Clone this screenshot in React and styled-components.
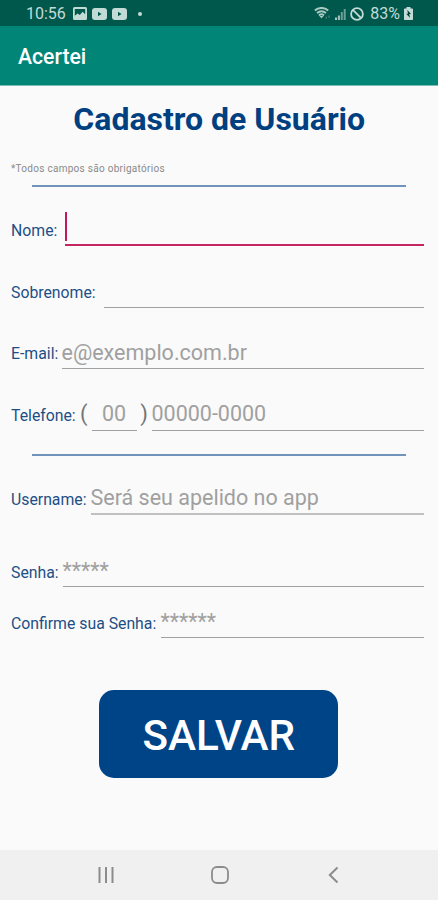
import React from "react";
import styled, { createGlobalStyle } from "styled-components";

const GlobalStyle = createGlobalStyle`
  * {
    box-sizing: border-box;
  }

  body {
    margin: 0;
    background-color: #fafafa;
    font-family: Roboto, "Noto Sans", sans-serif;
  }
`;

const Screen = styled.div`
  display: flex;
  flex-direction: column;
  width: 438px;
  height: 900px;
  overflow: hidden;
  background-color: #fafafa;
`;

const StatusBar = styled.div`
  display: flex;
  justify-content: space-between;
  align-items: center;
  height: 26px;
  padding: 1px 25px 0 26px;
  background-color: #00574b;
  color: #c3dbd6;
`;

const StatusGroup = styled.div`
  display: flex;
  align-items: center;
  gap: ${(props) => props.$gap};
`;

const StatusText = styled.span`
  font-size: 16px;
  line-height: 24px;
  white-space: nowrap;
  margin: 0 ${(props) => props.$right || "0"} 0 ${(props) => props.$left || "0"};
`;

const Dot = styled.span`
  width: 4px;
  height: 4px;
  margin-left: 6px;
  border-radius: 50%;
  background-color: #c3dbd6;
`;

const AppBar = styled.header`
  display: flex;
  align-items: center;
  height: 60px;
  padding: 2px 0 0 18px;
  background-color: #008577;
  border-bottom: 1px solid #7dbdb6;
  color: #fff;
  font-size: 21.2px;
  font-weight: 500;
`;

const Form = styled.main`
  display: flex;
  flex-direction: column;
  flex: 1;
  padding: 0 14.5px 0 11px;
`;

const Title = styled.h1`
  margin: 13px 0 0 4px;
  color: #003f80;
  font-size: 32px;
  font-weight: 700;
  line-height: 40px;
  text-align: center;
  white-space: nowrap;
`;

const Notice = styled.p`
  margin: 24px 0 0;
  color: #8a8a8a;
  font-size: 10px;
  line-height: 12px;
  letter-spacing: 0.28px;
`;

const Divider = styled.hr`
  width: 374px;
  height: 2px;
  margin: ${(props) => props.$top} 0 0 21px;
  border: none;
  background-color: #6f93b9;
`;

const Row = styled.div`
  display: flex;
  align-items: flex-end;
  height: ${(props) => props.$height}px;
`;

const Label = styled.label`
  flex: none;
  width: ${(props) => props.$width}px;
  padding-bottom: ${(props) => props.$bottom || 5}px;
  color: #1d4f86;
  font-size: 15.8px;
  line-height: 20px;
  white-space: nowrap;
`;

const Field = styled.div`
  display: flex;
  align-items: flex-end;
  justify-content: ${(props) => (props.$center ? "center" : "flex-start")};
  flex: ${(props) => (props.$width ? "none" : "1")};
  width: ${(props) => (props.$width ? props.$width + "px" : "auto")};
  height: 36px;
  padding-bottom: ${(props) => props.$bottom || 3}px;
  border-bottom: ${(props) => props.$line || "1.5px solid #a0a0a0"};
  color: #a0a0a0;
  font-size: 21.5px;
  line-height: 26px;
  white-space: nowrap;
`;

const Caret = styled.span`
  width: 2px;
  height: 29px;
  background-color: #c2185b;
`;

const Paren = styled.span`
  flex: none;
  width: ${(props) => props.$width}px;
  padding-bottom: 4px;
  color: #757575;
  font-size: 22px;
  line-height: 26px;
  text-align: ${(props) => props.$align || "left"};
`;

const SaveButton = styled.button`
  align-self: center;
  width: 239px;
  height: 88px;
  margin: 52px 0 0 3px;
  padding: 3px 0 0;
  border: none;
  border-radius: 15px;
  background-color: #004488;
  color: #fff;
  font-family: inherit;
  font-size: 42.2px;
  font-weight: 500;
`;

const NavBar = styled.nav`
  display: flex;
  align-items: center;
  height: 50px;
  padding-left: 97px;
  background-color: #f0f0f0;
`;

const NavButton = styled.button`
  display: flex;
  margin: 0 ${(props) => props.$gap || 0}px 0 0;
  padding: 0;
  border: none;
  background: none;
`;

const ImageIcon = () => (
  <svg width="14" height="13" viewBox="0 0 14 13">
    <rect width="14" height="13" rx="1.5" fill="#c3dbd6" />
    <path d="M1.8 2h10.4v5.2L9.6 4.8 6.8 8 4.6 6.4 1.8 8.8z" fill="#00574b" />
    <path d="M2 10.8l2.8-2.6 2 1.3 2.6-2.7 2.6 3v1z" fill="#c3dbd6" />
  </svg>
);

const VideoIcon = () => (
  <svg width="15" height="12" viewBox="0 0 15 12">
    <rect width="15" height="12" rx="3" fill="#c3dbd6" />
    <path d="M6 3.8v4.4L9.6 6z" fill="#00574b" />
  </svg>
);

const WifiIcon = () => (
  <svg width="17" height="13" viewBox="0 0 17 13">
    <g fill="none" stroke="#a9c9c3" strokeWidth="2">
      <path d="M.8 3.6C4.7.1 10.3.1 14.2 3.6" />
      <path d="M3 6.1c2.7-2.3 6.3-2.3 9 0" />
      <path d="M5 8.4c1.5-1.3 3.5-1.3 5 0" />
    </g>
    <path d="M5.5 9h4l-2 2.6z" fill="#a9c9c3" />
    <path d="M12.3 9.5v2.5M15 11V8.5" stroke="#3f8075" strokeWidth="1.2" />
  </svg>
);

const SignalIcon = () => (
  <svg width="11" height="12" viewBox="0 0 11 12">
    <path d="M1 9.5V12M3.9 7.5V12" stroke="#a5c6c0" strokeWidth="2" />
    <path d="M6.8 4V12M9.7 1V12" stroke="#6b9f97" strokeWidth="2" />
  </svg>
);

const BlockIcon = () => (
  <svg width="14" height="14" viewBox="0 0 14 14">
    <circle cx="7" cy="7" r="5.9" fill="none" stroke="#c3dbd6" strokeWidth="1.8" />
    <path d="M2.9 2.9l8.2 8.2" stroke="#c3dbd6" strokeWidth="1.8" />
  </svg>
);

const BatteryIcon = () => (
  <svg width="9" height="13" viewBox="0 0 9 13">
    <path
      d="M2.5 0h4v1.5H8.2q.8 0 .8.8V12.2q0 .8-.8.8H.8Q0 13 0 12.2V2.3q0-.8.8-.8h1.7z"
      fill="#c3dbd6"
    />
    <path d="M3.3 3L7 7H5.2L6 10.8 2.2 6.8H4z" fill="#00392f" />
  </svg>
);

const RecentsIcon = () => (
  <svg width="18" height="18" viewBox="0 0 18 18">
    <path d="M2.5 1v16M9 1v16M15.5 1v16" stroke="#8c8c8c" strokeWidth="2" />
  </svg>
);

const HomeIcon = () => (
  <svg width="18" height="18" viewBox="0 0 18 18">
    <rect
      x="1"
      y="1"
      width="16"
      height="16"
      rx="5"
      fill="none"
      stroke="#8c8c8c"
      strokeWidth="1.8"
    />
  </svg>
);

const BackIcon = () => (
  <svg width="11" height="18" viewBox="0 0 11 18">
    <path d="M9.5 1.5L1.8 9l7.7 7.5" fill="none" stroke="#8c8c8c" strokeWidth="2" />
  </svg>
);

function App() {
  return (
    <>
      <GlobalStyle />
      <Screen>
        <StatusBar>
          <StatusGroup $gap="5px">
            <StatusText $right="2px">10:56</StatusText>
            <ImageIcon />
            <VideoIcon />
            <VideoIcon />
            <Dot />
          </StatusGroup>
          <StatusGroup $gap="4px">
            <WifiIcon />
            <SignalIcon />
            <BlockIcon />
            <StatusText $left="2px">83%</StatusText>
            <BatteryIcon />
          </StatusGroup>
        </StatusBar>
        <AppBar>Acertei</AppBar>

        <Form>
          <Title>Cadastro de Usuário</Title>
          <Notice>*Todos campos são obrigatórios</Notice>
          <Divider $top="10px" />

          <Row $height={59}>
            <Label $width={54}>Nome:</Label>
            <Field $line="2px solid #c2255f">
              <Caret />
            </Field>
          </Row>
          <Row $height={62}>
            <Label $width={92.5}>Sobrenome:</Label>
            <Field />
          </Row>
          <Row $height={61}>
            <Label $width={50.5}>E-mail:</Label>
            <Field $bottom={2}>e@exemplo.com.br</Field>
          </Row>
          <Row $height={62}>
            <Label $width={69}>Telefone:</Label>
            <Paren $width={11.5}>(</Paren>
            <Field $width={45} $center>
              00
            </Field>
            <Paren $width={15} $align="center">
              )
            </Paren>
            <Field>00000-0000</Field>
          </Row>

          <Divider $top="23px" />

          <Row $height={59}>
            <Label $width={79.5}>Username:</Label>
            <Field $line="2px solid #c0c0c0" $bottom={2}>
              Será seu apelido no app
            </Field>
          </Row>
          <Row $height={72}>
            <Label $width={51.5} $bottom={4}>
              Senha:
            </Label>
            <Field $bottom={2}>*****</Field>
          </Row>
          <Row $height={51}>
            <Label $width={149.5} $bottom={4}>
              Confirme sua Senha:
            </Label>
            <Field $bottom={2}>******</Field>
          </Row>

          <SaveButton type="button">SALVAR</SaveButton>
        </Form>

        <NavBar>
          <NavButton $gap={96}>
            <RecentsIcon />
          </NavButton>
          <NavButton $gap={99}>
            <HomeIcon />
          </NavButton>
          <NavButton>
            <BackIcon />
          </NavButton>
        </NavBar>
      </Screen>
    </>
  );
}

export default App;
